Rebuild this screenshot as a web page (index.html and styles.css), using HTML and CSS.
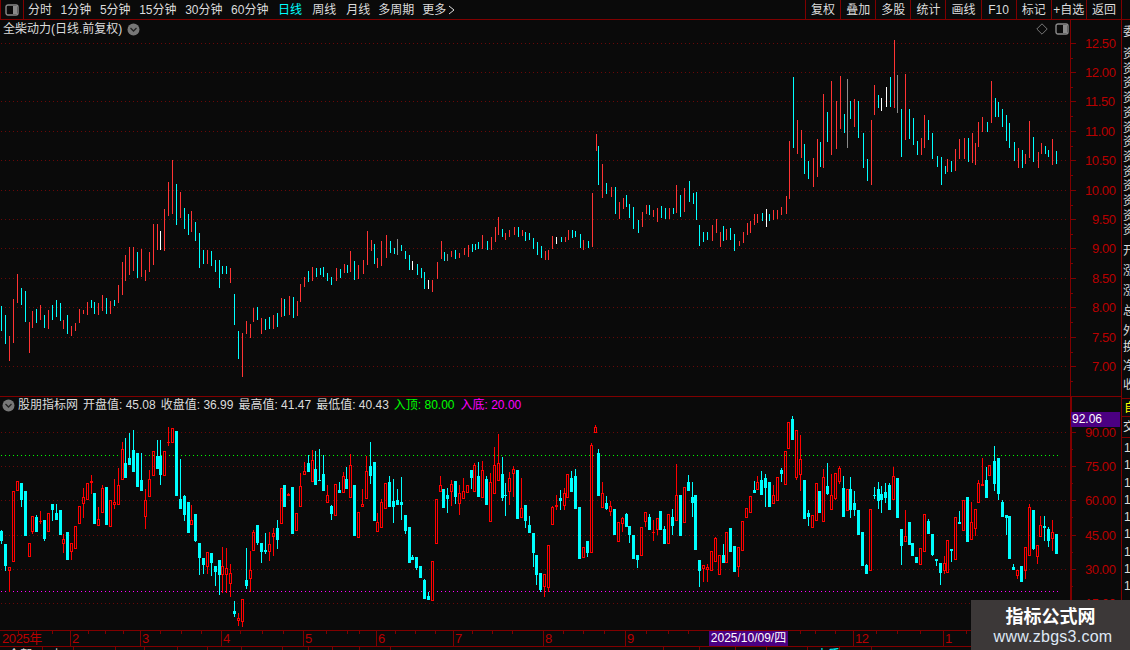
FILE: index.html
```html
<!DOCTYPE html>
<html lang="zh-CN">
<head>
<meta charset="utf-8">
<title>全柴动力</title>
<link rel="stylesheet" href="styles.css">
</head>
<body>
<div class="app">
  <header class="topbar">
    <div class="panel-btn">
      <svg class="panel-icon" width="14" height="12" viewBox="0 0 14 12"><rect x="1" y="1" width="12" height="10" rx="2" fill="none" stroke="#8a8a8a" stroke-width="1.4"/><rect x="8" y="2" width="4" height="8" fill="#8a8a8a"/></svg>
    </div>
    <nav class="periods">
      <span>分时</span><span>1分钟</span><span>5分钟</span><span>15分钟</span><span>30分钟</span><span>60分钟</span>
      <span class="active">日线</span><span class="wide">周线</span><span class="wide">月线</span><span class="tight">多周期</span>
      <span class="more tight">更多<svg width="7" height="10" viewBox="0 0 7 10"><path d="M1 1l5 4-5 4" fill="none" stroke="#ddd"/></svg></span>
    </nav>
    <div class="tools">
      <span>复权</span><span>叠加</span><span>多股</span><span>统计</span><span>画线</span><span>F10</span><span>标记</span><span>+自选</span><span>返回</span>
    </div>
    <div class="tool-end"></div>
  </header>
  <div class="workspace">
    <main class="charts">
      <section class="pane pane-price">
        <svg id="price" class="plot" width="1121" height="376" viewBox="0 20 1121 376"></svg>
        <div class="title-row">
          <span>全柴动力(日线.前复权)</span>
          <svg class="chev" width="13" height="13" viewBox="0 0 13 13"><circle cx="6.5" cy="6.5" r="6" fill="#777"/><path d="M3.5 5l3 3 3-3" fill="none" stroke="#222" stroke-width="1.3"/></svg>
        </div>
        <div class="pane-icons">
          <svg width="12" height="12" viewBox="0 0 12 12"><path d="M6 .8L11.2 6 6 11.2.8 6z" fill="none" stroke="#777"/></svg>
          <svg width="14" height="12" viewBox="0 0 14 12"><rect x="1" y="1" width="12" height="10" rx="2" fill="none" stroke="#8a8a8a" stroke-width="1.4"/><rect x="8" y="2" width="4" height="8" fill="#8a8a8a"/></svg>
        </div>
      </section>
      <section class="pane pane-ind">
        <svg id="ind" class="plot" width="1121" height="233" viewBox="0 397 1121 233"></svg>
        <div class="legend">
          <svg class="chev-l" width="13" height="13" viewBox="0 0 13 13"><circle cx="6.5" cy="6.5" r="6" fill="#777"/><path d="M3.5 5l3 3 3-3" fill="none" stroke="#222" stroke-width="1.3"/></svg>
          <span>股朋指标网</span>
          <span>开盘值: 45.08</span>
          <span>收盘值: 36.99</span>
          <span>最高值: 41.47</span>
          <span>最低值: 40.43</span>
          <span class="green">入顶: 80.00</span>
          <span class="magenta">入底: 20.00</span>
        </div>
        <div class="cursor-value">92.06</div>
      </section>
      <div class="time-axis" id="axis">
        <div class="cursor-date">2025/10/09/四</div>
      </div>
      <div class="tabs" id="tabs"></div>
    </main>
    <aside class="side">
      <div class="side-group g1">委</div>
      <div class="side-group g2">资资资资资资资资资资资资资</div>
      <div class="side-group g3">开涨涨总外</div>
      <div class="side-group g4">换净收</div>
      <div class="side-self">自</div>
      <div class="side-jiao">交</div>
      <div class="side-nums">1<br>1<br>1<br>1<br>1<br>1<br>1<br>1<br>1</div>
    </aside>
  </div>
  <div class="watermark">
    <div class="wm-name">指标公式网</div>
    <div class="wm-url">www.zbgs3.com</div>
  </div>
</div>
<script src="chart.js"></script>
</body>
</html>
```
FILE: styles.css
```css
* { box-sizing: border-box; }
html, body { margin: 0; padding: 0; background: #0a0a0a; }
.app {
  position: relative;
  width: 1130px;
  height: 650px;
  overflow: hidden;
  display: flex;
  flex-direction: column;
  background: #0a0a0a;
  color: #dcdcdc;
  font: 12px/14px "Liberation Sans", "Noto Sans CJK SC", sans-serif;
}
.topbar {
  flex: none;
  height: 20px;
  display: flex;
  align-items: stretch;
  border-bottom: 1px solid #800000;
}
.panel-btn {
  width: 24px;
  display: flex;
  align-items: center;
  justify-content: center;
  border-left: 1px solid #800000;
  border-right: 1px solid #800000;
}
.periods {
  display: flex;
  align-items: center;
  gap: 8.6px;
  padding-left: 4px;
  flex: 1;
  white-space: nowrap;
}
.periods .active { color: #00ffff; margin-left: 1px; }
.periods .wide { margin-left: 1.5px; }
.periods .tight { margin-left: -0.6px; }
.more { display: inline-flex; align-items: center; gap: 2px; }
.tools {
  width: 316px;
  display: grid;
  grid-template-columns: repeat(9, 1fr);
}
.tools span {
  display: flex;
  align-items: center;
  justify-content: center;
  border-left: 1px solid #800000;
  white-space: nowrap;
}
.tool-end { width: 9px; border-left: 1px solid #800000; }
.workspace { flex: 1; display: flex; min-height: 0; }
.charts {
  width: 1122px;
  flex: none;
  display: flex;
  flex-direction: column;
  border-right: 1px solid #800000;
}
.pane { position: relative; flex: none; }
.pane-price { height: 377px; border-bottom: 1px solid #800000; }
.pane-ind { height: 233px; }
.plot { position: absolute; left: 0; top: 0; display: block; }
.title-row {
  position: relative;
  display: flex;
  align-items: center;
  gap: 5px;
  padding: 2px 0 0 3px;
}
.pane-icons {
  position: absolute;
  top: 3px;
  left: 1036px;
  display: flex;
  gap: 7px;
}
.legend {
  position: relative;
  display: flex;
  align-items: center;
  gap: 5px;
  padding: 1px 0 0 2px;
  white-space: nowrap;
}
.chev-l { margin-right: -2px; }
.green { color: #00ff00; }
.magenta { color: #ff00ff; margin-left: 1px; }
.cursor-value {
  position: absolute;
  left: 1071px;
  top: 15px;
  width: 49px;
  height: 15px;
  padding-left: 1px;
  background: #4b0082;
  color: #fff;
  line-height: 15px;
}
.price-label {
  font: 13px "Liberation Sans", sans-serif;
  letter-spacing: -0.4px;
  fill: #b80000;
}
.time-axis {
  position: relative;
  flex: none;
  height: 17px;
  border-top: 1px solid #800000;
  border-bottom: 1px solid #800000;
  color: #b80000;
  font-size: 13px;
  letter-spacing: -0.4px;
  overflow: hidden;
}
.axis-label { position: absolute; top: 0; line-height: 15px; padding-left: 1px; border-left: 1px solid #800000; height: 15px; }
.axis-first { border-left: 0; }
.axis-tick { position: absolute; top: 0; width: 1px; height: 3px; background: #800000; }
.cursor-date {
  position: absolute;
  left: 709px;
  top: 0;
  width: 79px;
  height: 15px;
  background: #4b0082;
  color: #fff;
  font-size: 12px;
  letter-spacing: 0;
  line-height: 15px;
  text-align: center;
  z-index: 1;
}
.tabs { flex: none; height: 3px; display: flex; overflow: hidden; }
.tabs div {
  flex: none;
  height: 3px;
  border-right: 1px solid #800000;
  padding: 2px 0 0 8px;
  line-height: 12px;
  white-space: nowrap;
  overflow: hidden;
}
.tabs .on { color: #00ffff; }
.side { flex: 1; overflow: hidden; display: flex; flex-direction: column; }
.side-group {
  width: 12px;
  margin-left: 1px;
  word-break: break-all;
  line-height: 14.7px;
  overflow: hidden;
}
.side .g1 { height: 25px; padding-top: 5px; }
.side .g2 { height: 194px; padding-top: 2px; }
.side .g3 { height: 97px; padding-top: 2px; line-height: 20px; }
.side .g4 { height: 62px; padding-top: 2px; line-height: 19px; }
.side-self {
  height: 19px;
  padding: 2px 0 0 2px;
  color: #ffff00;
  border-top: 1px solid #800000;
  border-bottom: 1px solid #800000;
}
.side-jiao { height: 21px; padding: 3px 0 0 1px; border-bottom: 1px solid #800000; white-space: nowrap; }
.side-nums { padding: 2px 0 0 2px; line-height: 17.3px; }
.watermark {
  position: absolute;
  left: 971px;
  top: 600px;
  width: 159px;
  height: 50px;
  background: #3c3838;
  color: #fff;
  text-align: center;
}
.wm-name {
  font: bold 18px/24px "Noto Sans CJK SC", sans-serif;
  margin: 3px 0 0 0;
}
.wm-url {
  font: 16px/20px "Liberation Sans", sans-serif;
  color: #dfe8f5;
  letter-spacing: 0.25px;
  margin-left: 5px;
}
```
FILE: chart.js
```js
(function () {
  var NS = 'http://www.w3.org/2000/svg';
  var DRED = '#800000', GRID = '#6a0808';
  var COL = { r: '#ff3333', c: '#00ffff', w: '#ffffff', g: '#8a8a8a' };

  function add(svg, tag, attrs, text) {
    var e = document.createElementNS(NS, tag);
    for (var k in attrs) e.setAttribute(k, attrs[k]);
    if (text) e.textContent = text;
    svg.appendChild(e);
    return e;
  }
  function rect(svg, x, y, w, h, c) {
    add(svg, 'rect', { x: x, y: y, width: w, height: h, fill: c, 'shape-rendering': 'crispEdges' });
  }
  function dotted(svg, y, x2, c) {
    add(svg, 'line', { x1: 1, y1: y + 0.5, x2: x2, y2: y + 0.5, stroke: c, 'stroke-dasharray': '1 3', 'shape-rendering': 'crispEdges' });
  }

  /* ---------- price pane ---------- */
  var p = document.getElementById('price');
  var gridY = [43, 72, 101, 131, 160, 190, 219, 248, 278, 307, 337, 366];
  var labels = ['12.50', '12.00', '11.50', '11.00', '10.50', '10.00', '9.50', '9.00', '8.50', '8.00', '7.50', '7.00'];
  gridY.forEach(function (y, i) {
    dotted(p, y, 1066, GRID);
    rect(p, 1070, y, 6, 1, DRED);
    rect(p, 1070, y + 15, 3, 1, DRED);
    var x = labels[i].length === 5 ? 1085 : 1092;
    add(p, 'text', { x: x, y: y + 5, 'class': 'price-label' }, labels[i]);
  });
  rect(p, 1070, 20, 1, 376, DRED);

  /* bars: zoom x, top, bottom, colour */
  var bars1 = '4 468 543 c,16 495 582 c,28 558 633 r,40 447 579 r,52 372 459 r,64 414 465 c,76 423 516 c,88 516 609 r,97 483 534 r,109 477 519 c,121 465 510 r,133 495 534 c,145 480 537 r,157 465 510 c,169 450 501 c,181 459 513 c,190 510 537 r,202 495 552 c,214 528 558 r,226 519 543 r,238 477 519 r,250 480 492 r,262 456 495 r,274 450 474 c,283 456 492 c,295 459 495 r,307 435 483 r,319 444 492 c,331 453 492 r,343 450 468 c,355 405 459 r,367 336 435 r,376 315 393 r,388 291 375 r,400 291 363 r,412 306 384 c,424 297 381 r,436 360 393 r,448 306 366 r,460 222 345 r,472 222 300 r,481 243 300 w,493 177 303 r,505 96 198 r,517 30 192 r,529 102 225 c,541 126 204 r,553 174 237 c,565 192 255 c,574 183 246 r,586 216 273 c,598 249 354 c,610 300 342 c,622 300 342 r,634 303 348 c,646 330 366 c,658 330 414 c,667 348 372 c,679 348 372 c,691 354 399 r,703 432 525 c,715 543 627 c,727 549 681 r,739 513 552 r,751 522 564 r,760 474 516 r,772 471 510 c';
  bars1.split(',').forEach(function (s) {
    var a = s.split(' ');
    rect(p, Math.floor(a[0] / 3), Math.round(150 + a[1] / 3), 1, Math.round((a[2] - a[1]) / 3), COL[a[3]]);
  });
  /* the few bars between the two readings */
  [[261, 318, 334, 'r'], [265, 319, 330, 'c'], [269, 317, 329, 'c'], [273, 315, 329, 'r'], [277, 313, 327, 'c']].forEach(function (a) {
    rect(p, a[0], a[1], 1, a[2] - a[1], COL[a[3]]);
  });
  var bars2 = '42 774 830 r,48 778 830 c,56 768 825 r,64 771 835 c,72 784 830 r,79 733 788 r,87 712 741 r,95 693 726 c,102 681 723 r,109 684 711 c,117 684 705 c,124 681 711 c,132 699 723 c,140 711 735 c,148 684 723 r,156 687 714 c,164 672 699 r,170 675 699 c,177 633 696 r,185 663 720 c,193 675 717 r,201 660 702 r,209 573 675 r,217 600 632 r,224 612 672 c,230 654 684 r,238 603 678 r,246 585 654 r,254 603 639 c,262 624 642 c,269 597 645 g,277 615 633 c,285 633 657 c,293 645 690 c,298 663 690 w,307 672 705 c,315 684 714 c,322 696 747 c,330 720 747 w,338 720 756 r,346 666 717 r,354 603 657 r,361 636 663 c,367 642 663 g,375 633 651 r,383 630 657 c,391 639 654 r,399 624 645 r,407 615 651 r,415 612 636 c,421 612 630 c,428 606 627 c,436 585 628 r,444 603 630 c,452 591 630 r,460 561 606 r,467 531 585 r,475 567 591 c,481 579 600 r,489 570 591 r,497 561 585 r,505 561 591 c,513 570 588 r,520 576 603 c,528 579 600 c,536 594 627 c,543 606 645 c,550 618 654 c,559 633 660 r,565 630 660 r,573 588 627 r,581 591 612 w,589 591 606 c,597 591 606 r,604 570 600 r,611 570 594 c,618 573 591 c,627 582 624 c,634 600 630 r,642 603 624 c,650 459 621 r,658 282 333 r,663 318 435 c,671 372 474 r,679 429 462 c,687 441 471 r,695 441 522 c,703 486 537 r,711 474 507 r,718 465 501 c,724 492 534 c,732 501 567 c,740 540 579 c,748 516 561 r,756 495 522 r,763 495 525 c,771 510 531 r,779 504 546 r,785 498 534 c,793 504 537 c,801 504 537 r,809 504 522 c,816 435 519 r,824 465 531 c,832 444 516 r,840 423 486 c,848 459 492 c,854 456 540 c,861 555 618 c,869 576 606 c,877 576 600 c,885 555 603 r,893 537 579 r,901 576 621 r,908 558 603 c,914 567 600 r,922 564 600 c,930 582 633 c,938 603 618 r,946 576 609 r,954 549 585 r,961 543 579 r,969 522 555 r,975 522 549 r,983 519 543 c,991 507 561 w,998 522 543 c,1006 510 540 r,1014 510 537 r,1022 501 525 r,1030 468 522 r,1036 303 477 r,1044 111 324 c,1052 240 342 r,1060 270 354 r,1067 312 402 c,1075 363 417 c,1083 354 441 r,1091 297 411 r,1097 306 381 c,1104 162 384 r,1112 216 306 c,1120 123 345 r,1128 183 327 r,1136 108 267 r,1144 222 279 c,1151 117 324 g,1157 183 237 c,1165 177 261 r,1173 183 294 c,1181 279 384 c,1189 357 423 c,1197 240 435 r,1204 135 225 r,1212 165 204 c,1218 174 213 w,1226 141 201 w,1234 111 201 c,1242 0 204 r,1249 105 219 g,1257 207 351 c,1265 102 300 r,1273 207 297 c,1279 234 315 c,1287 303 345 c,1295 294 345 r,1302 225 324 r,1310 240 300 c,1318 279 357 c,1326 348 381 c,1334 351 435 c,1342 378 402 c,1347 357 396 r,1355 363 396 c,1363 327 393 r,1371 297 357 r,1379 294 357 r,1387 294 366 c,1395 279 369 r,1402 309 375 r,1408 246 321 r,1416 231 276 r,1424 246 276 c,1432 123 249 r,1440 174 231 c,1447 186 231 c,1455 207 261 c,1462 225 303 c,1469 249 324 c,1477 306 363 c,1485 324 384 r,1493 330 384 c,1500 342 372 r,1508 243 354 r,1516 291 366 c,1524 336 384 r,1530 309 342 r,1538 318 342 c,1545 330 351 c,1553 297 375 r,1561 333 372 c';
  bars2.split(',').forEach(function (s) {
    var a = s.split(' ');
    rect(p, Math.round(260 + a[0] / 1.96), Math.round(40 + a[1] / 3), 1, Math.round((a[2] - a[1]) / 3), COL[a[3]]);
  });

  /* ---------- indicator pane ---------- */
  var q = document.getElementById('ind');
  var indY = [432, 466, 500, 535, 569, 603];
  var indL = ['90.00', '75.00', '60.00', '45.00', '30.00', '15.00'];
  indY.forEach(function (y, i) {
    dotted(q, y, 1066, GRID);
    rect(q, 1070, y, 6, 1, DRED);
    rect(q, 1070, y + 17, 3, 1, DRED);
    add(q, 'text', { x: 1085, y: y + 5, 'class': 'price-label' }, indL[i]);
  });
  rect(q, 1070, 397, 2, 233, DRED);
  dotted(q, 455, 1058, '#00ff00');
  dotted(q, 591, 1058, '#ff00ff');

  /* candles: zoom x, colour, body top, body bottom, [wick top], [wick bottom] */
  function candles(ox, oy, data) {
    data.split(',').forEach(function (s) {
      var a = s.split(' ');
      var cx = Math.floor(ox + a[0] / 3);
      var up = a[1] === 'r';
      var c = up ? '#ff0000' : '#00ffff';
      var bt = Math.round(oy + a[2] / 3), bb = Math.round(oy + a[3] / 3);
      var wt = a[4] ? Math.round(oy + a[4] / 3) : bt;
      var wb = a[5] ? Math.round(oy + a[5] / 3) : bb;
      if (wb > wt) {
        if (wt < bt) rect(q, cx, wt, 1, bt - wt, c);
        if (wb > bb) rect(q, cx, bb, 1, wb - bb, c);
      }
      var h = Math.max(bb - bt, 1);
      if (up && h >= 3) {
        add(q, 'rect', { x: cx - 0.5, y: bt + 0.5, width: 2, height: h - 1, fill: 'none', stroke: c, 'shape-rendering': 'crispEdges' });
      } else {
        rect(q, cx - 1, bt, 3, h, c);
      }
    });
  }
  candles(0, 420, '5 c 333 363 330 372,16 c 372 438 372 453,28 r 441 453 441 516,40 r 213 426,52 r 183 213,64 c 189 240 189 261,76 c 213 348,88 r 369 411,97 r 288 336 288 342,109 c 291 336 285,121 r 303 306 273 312,133 c 300 357 300 363,145 r 279 336,157 c 252 270 252 303,169 c 279 300 252,181 c 270 345,190 r 357 372 342 399,202 c 336 420,214 r 369 396 369 420,226 r 318 387,238 r 258 312,250 r 231 252 204 294,262 r 189 240,274 r 183 189 165 222,283 c 219 312,295 r 297 318 261,307 r 204 279 195,319 c 201 315,331 r 240 321,343 r 246 255 177 267,355 r 195 255 144,367 r 87 180 66,376 c 129 174 54,388 c 114 135 39,400 c 90 156 30,412 c 99 201,424 c 180 213 99,436 r 240 291 207 327,448 r 177 231 150,460 r 93 168,472 c 108 147 60,481 c 108 165 60 195,493 r 93 168,505 r 66 69 21 78,517 r 24 69,529 c 33 228,541 c 237 267 117,553 c 228 285 225 303,565 c 246 339,574 r 300 315 255,586 c 282 363 282 366,598 c 369 414 369 465,610 c 414 435 414 462,622 r 396 441 396 462,634 c 399 429 399 468,646 c 438 456 438 498,658 c 420 465 420 525,667 r 438 465 381 519,679 r 444 465 384 519,691 r 459 492 432 531,703 c 573 582 543 591,715 r 594 603 579 618,727 r 537 606 537 621,739 c 480 498 384 507,751 r 450 477 393 516,760 r 336 393 330,772 c 315 369 315 375,784 c 369 396 369 429,796 c 390 396 339 402,808 r 372 396 336 423');
  candles(270, 415, '10 r 354 366 339 423,22 c 339 375 315 402,34 r 219 327,43 c 210 276,55 r 237 243 234,67 c 216 357,79 r 294 348,91 r 213 276 174,103 r 168 180 141,115 c 144 171 120,127 r 135 201 105,136 c 162 210 108,148 c 195 198 102 198,160 c 177 228 120,172 r 240 264 210,184 c 273 297 270 315,196 r 207 303,208 c 225 234 201,220 r 183 234 171,229 c 192 222 156,241 r 150 249 117,253 c 210 363,265 r 291 369,277 r 267 276 222,289 r 168 252 123,301 c 153 183 81 207,313 c 141 318,322 r 321 351 294,334 r 261 339 252,346 r 204 282,358 c 201 276 183,370 c 258 276 192 324,382 c 255 270 222,394 c 261 270 186 315,406 c 300 348 300 357,418 c 336 444,427 c 426 435 420,439 c 426 459 426 465,451 c 453 489,463 c 495 552 492,475 c 543 555 531,487 r 438 558,499 r 252 387,511 r 210 231 183,520 c 222 279,532 c 240 252 219 294,544 r 207 231 195 273,556 c 198 246 198 267,568 r 234 267 210 300,580 r 228 252 189,592 r 210 234,604 c 165 189 165 222,613 r 150 231 144,625 c 183 246 141,637 r 165 249 138,649 c 192 270 183,661 r 201 321 174,673 r 150 237 96,685 r 144 198 57,697 c 177 249 126 258,706 c 240 243 204 303,718 r 189 231 171 270,730 r 162 177 153 246,742 c 165 312,754 r 279 309 189,766 c 270 318 270 339,778 c 330 354 303,790 c 354 414 354 456,799 c 420 480 420 510,811 c 474 525 474 531,823 r 477 516 477 546,835 r 390 519 390 531,847 r 276 330 273,859 r 270 276 240 285,871 c 249 258 225 285,883 r 234 273 219 285,892 r 177 249,904 c 189 231 168,916 c 183 282 162,928 c 276 432,940 r 396 429,952 c 378 414 378 426,964 r 90 414 84,976 r 36 54 30,985 c 114 243 102,997 r 234 279 201,1009 c 264 282 243 285,1021 r 273 291 258 303,1033 c 282 360,1045 r 321 381,1057 r 309 327 306 351,1069 c 297 336 294,1078 c 333 360 333 384,1090 c 360 432,1102 c 420 435 420 459,1114 r 336 423,1126 r 291 321 291 336,1138 c 306 345 297,1150 r 351 354 315 378,1162 r 309 345 309 360,1171 c 288 345,1183 c 342 387 333,1195 r 297 387');
  candles(670, 415, '7 c 306 333 282 360,19 r 240 318 147,31 c 240 363,43 r 216 324,55 c 201 228 180,67 c 246 264 201 306,76 c 240 405,88 c 435 468 435 516,100 r 450 462 450 501,112 r 456 465 447 501,124 r 408 468,136 r 369 441 366,148 r 420 480,160 c 420 444 387,169 r 351 444,181 c 339 411,193 c 393 471,205 r 396 456 396 486,217 r 318 408,229 r 279 309,241 r 243 294,253 c 225 234 198,262 r 201 225 183,274 c 195 240 168,286 c 189 219 177 276,298 c 201 276,310 r 240 267 210,322 r 186 258,334 c 165 177 159 201,346 r 108 210,355 r 21 102,367 c 12 75 3,379 r 45 189 45 195,391 r 132 180 60 228,403 c 195 312,415 c 294 306 285 333,427 r 300 339,439 r 204 318,448 c 228 294,460 r 186 321 162,472 c 213 237 144 240,484 r 240 285 177,496 r 174 252 174 255,508 r 159 201 153 207,520 c 219 306 183,532 r 222 288,541 c 222 285 186 309,553 c 264 285 228 303,565 c 285 360,577 c 351 453,589 c 450 477 447,601 r 282 468,613 c 240 243 216 252,625 c 222 258 201 282,634 c 237 255 213 294,646 c 231 249 204 264,658 c 210 285 204,670 r 183 255 156,682 c 189 309,694 c 342 393 342 450,706 r 363 381 285,718 c 321 390,727 c 384 423,739 c 426 444,751 r 399 450,763 r 297 411,775 c 318 357 312,787 c 357 420 357 423,799 c 432 438 432 453,811 c 444 474 444 510,823 r 444 468 423 477,832 r 375 474,844 c 402 408 402 441,856 r 306 435,868 c 321 327 288,880 r 255 348,892 c 246 381,904 r 321 375 261,916 r 282 342 282 363,925 r 204 264 195,937 r 207 213 129,949 c 195 249 156,958 r 150 183');
  candles(960, 385, '103 c 228 297 183 318,115 c 219 327 219 345,127 c 351 396 345,139 c 390 399 390 450,148 c 393 522,160 c 546 555 537,172 r 555 573 555 582,184 c 543 591,196 r 486 557 486 582,208 r 366 513 357,220 c 375 492 375 495,232 r 480 516 480 537,241 r 420 456 393,253 c 423 429 393 468,265 c 432 468 426 486,277 r 441 462 405 498,289 c 447 507');

  /* ---------- time axis ---------- */
  var axis = document.getElementById('axis');
  function el(parent, cls, left, text) {
    var d = document.createElement('div');
    d.className = cls;
    d.style.left = left + 'px';
    if (text) d.textContent = text;
    parent.appendChild(d);
  }
  var months = [[1, '2025年'], [70, '2'], [140, '3'], [221, '4'], [303, '5'], [376, '6'], [453, '7'], [543, '8'], [625, '9'], [853, '12'], [943, '1']];
  months.forEach(function (m, i) {
    el(axis, i ? 'axis-label' : 'axis-label axis-first', m[0], m[1]);
  });
  [18, 36, 52, 88, 105, 123, 160, 181, 201, 240, 262, 283, 326, 347, 359, 395, 415, 435, 472, 492, 512, 563, 583, 604, 646, 668, 688, 800, 815, 835, 876, 897, 920, 966, 985].forEach(function (x) {
    el(axis, 'axis-tick', x);
  });

  /* ---------- clipped tab strip: only the tops of a few labels show ---------- */
  var tabs = document.getElementById('tabs');
  var edges = [42, 73, 115, 144, 177, 207, 241, 282, 308, 332, 359, 390, 663, 699, 735, 766, 807, 839, 871];
  var names = { 0: '全部', 1: '上', 17: '本质' };
  var prev = 0;
  edges.forEach(function (x, i) {
    var d = document.createElement('div');
    d.style.width = (x - prev + 1) + 'px';
    if (names[i]) d.textContent = names[i];
    if (i === 17) d.className = 'on';
    tabs.appendChild(d);
    prev = x + 1;
  });
})();
```
